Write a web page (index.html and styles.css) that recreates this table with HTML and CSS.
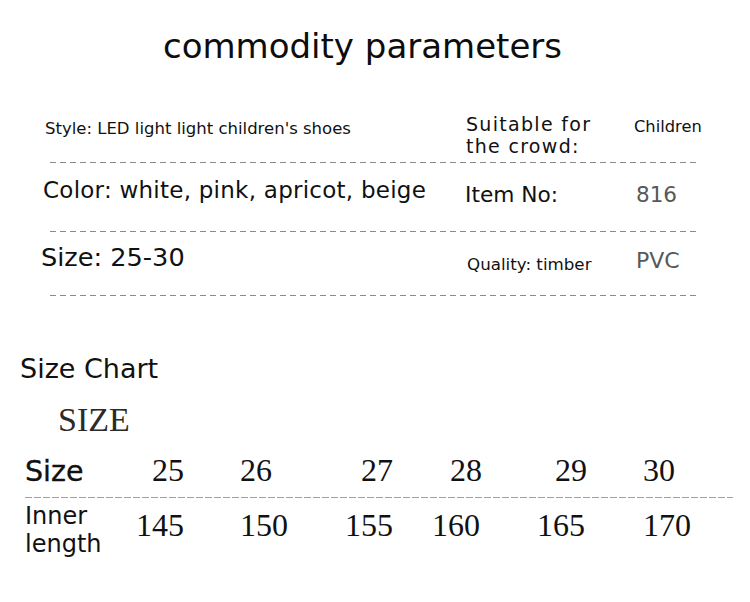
FILE: index.html
```html
<!DOCTYPE html>
<html lang="en">
<head>
<meta charset="utf-8">
<title>commodity parameters</title>
<link rel="stylesheet" href="styles.css">
</head>
<body>
<main class="page">
  <h1 class="title">commodity parameters</h1>

  <section class="params">
    <div class="prow prow-1">
      <div class="pmain pmain-style">Style: LED light light children's shoes</div>
      <div class="plabel plabel-crowd">Suitable for<br>the crowd:</div>
      <div class="pvalue pvalue-children">Children</div>
    </div>
    <div class="dash"></div>
    <div class="prow prow-2">
      <div class="pmain pmain-color">Color: white, pink, apricot, beige</div>
      <div class="plabel plabel-item">Item No:</div>
      <div class="pvalue pvalue-gray pvalue-item">816</div>
    </div>
    <div class="dash"></div>
    <div class="prow prow-3">
      <div class="pmain pmain-size">Size: 25-30</div>
      <div class="plabel plabel-quality">Quality: timber</div>
      <div class="pvalue pvalue-gray pvalue-pvc">PVC</div>
    </div>
    <div class="dash"></div>
  </section>

  <section class="chart">
    <h2 class="chart-title">Size Chart</h2>
    <div class="chart-caption">SIZE</div>
    <div class="crow crow-size">
      <div class="clabel">Size</div>
      <div class="cnum">25</div>
      <div class="cnum">26</div>
      <div class="cnum">27</div>
      <div class="cnum">28</div>
      <div class="cnum">29</div>
      <div class="cnum">30</div>
    </div>
    <div class="dash dash-light"></div>
    <div class="crow crow-inner">
      <div class="clabel clabel-two">Inner<br>length</div>
      <div class="cnum">145</div>
      <div class="cnum">150</div>
      <div class="cnum">155</div>
      <div class="cnum">160</div>
      <div class="cnum">165</div>
      <div class="cnum">170</div>
    </div>
  </section>
</main>
</body>
</html>
```

FILE: styles.css
```css
* { box-sizing: border-box; }

html, body {
  margin: 0;
  padding: 0;
  background: #ffffff;
}

body {
  font-family: "DejaVu Sans", "Noto Sans", sans-serif;
  color: #111111;
  width: 750px;
  height: 602px;
  overflow: hidden;
}

.page {
  display: flex;
  flex-direction: column;
}

/* ---------- title ---------- */
.title {
  margin: 26px 0 0 0;
  padding-right: 25px;
  text-align: center;
  font-size: 34px;
  font-weight: 400;
  line-height: 40px;
  color: #0d0d0d;
}

/* ---------- parameter table ---------- */
.params {
  display: flex;
  flex-direction: column;
  margin-top: 39px;
  padding-left: 43px;
  width: 697px;
}

.prow {
  display: grid;
  grid-template-columns: 422px 169px 1fr;
  align-items: start;
}

.prow > div { line-height: normal; white-space: nowrap; }

.prow-1 { height: 57px; }
.prow-2 { height: 68px; }
.prow-3 { height: 63px; }

.pmain-style { font-size: 16.5px; padding-top: 14px; margin-left: 2px; }
.pmain-color { font-size: 23px; letter-spacing: 0.25px; padding-top: 14px; }
.pmain-size { font-size: 25.6px; padding-top: 10px; margin-left: -2px; }

.prow > .plabel-crowd {
  font-size: 19px;
  line-height: 22px;
  letter-spacing: 1.3px;
  padding-top: 8px;
  margin-left: 1px;
}
.plabel-item { font-size: 21.7px; padding-top: 19px; }
.plabel-quality { font-size: 16.7px; padding-top: 22px; margin-left: 2px; }

.pvalue-children { font-size: 16.3px; padding-top: 12px; }
.pvalue-gray { color: #585858; }
.pvalue-item { font-size: 21.5px; padding-top: 19px; margin-left: 2px; }
.pvalue-pvc { font-size: 22px; padding-top: 16px; margin-left: 2px; }

.dash {
  height: 1px;
  margin-left: 7px;
  width: 647px;
  background: repeating-linear-gradient(to right, #8a8a8a 0 6px, transparent 6px 10px);
}

/* ---------- size chart ---------- */
.chart {
  display: flex;
  flex-direction: column;
  padding-left: 20px;
}

.chart-title {
  margin: 57px 0 0 0;
  font-size: 27px;
  font-weight: 400;
  line-height: 32px;
}

.chart-caption {
  margin: 16px 0 0 38px;
  font-family: "Liberation Serif", "DejaVu Serif", serif;
  font-size: 34px;
  line-height: 38px;
  color: #2a2a2a;
}

.crow {
  display: grid;
  margin-left: 5px;
  font-family: "Liberation Serif", "DejaVu Serif", serif;
}

.crow-size {
  grid-template-columns: 127px 88px 121px 89px 105px 88px 1fr;
  align-items: baseline;
  height: 47px;
  margin-top: 11px;
}

.crow-inner {
  grid-template-columns: 111px 104px 105px 87px 105px 106px 1fr;
  align-items: start;
}

.clabel {
  font-family: "DejaVu Sans", "Noto Sans", sans-serif;
  font-size: 28.5px;
  line-height: 40px;
  -webkit-text-stroke: 0.35px #111111;
}

.clabel-two {
  font-size: 24px;
  line-height: 28px;
  -webkit-text-stroke: 0;
  padding-top: 4px;
}

.cnum {
  font-size: 32px;
  line-height: 40px;
  color: #111111;
}

.crow-inner .cnum { margin-top: 7px; }

.dash-light {
  margin-left: 5px;
  width: 708px;
  background: repeating-linear-gradient(to right, #a0a0a0 0 7px, transparent 7px 9px);
}
```
